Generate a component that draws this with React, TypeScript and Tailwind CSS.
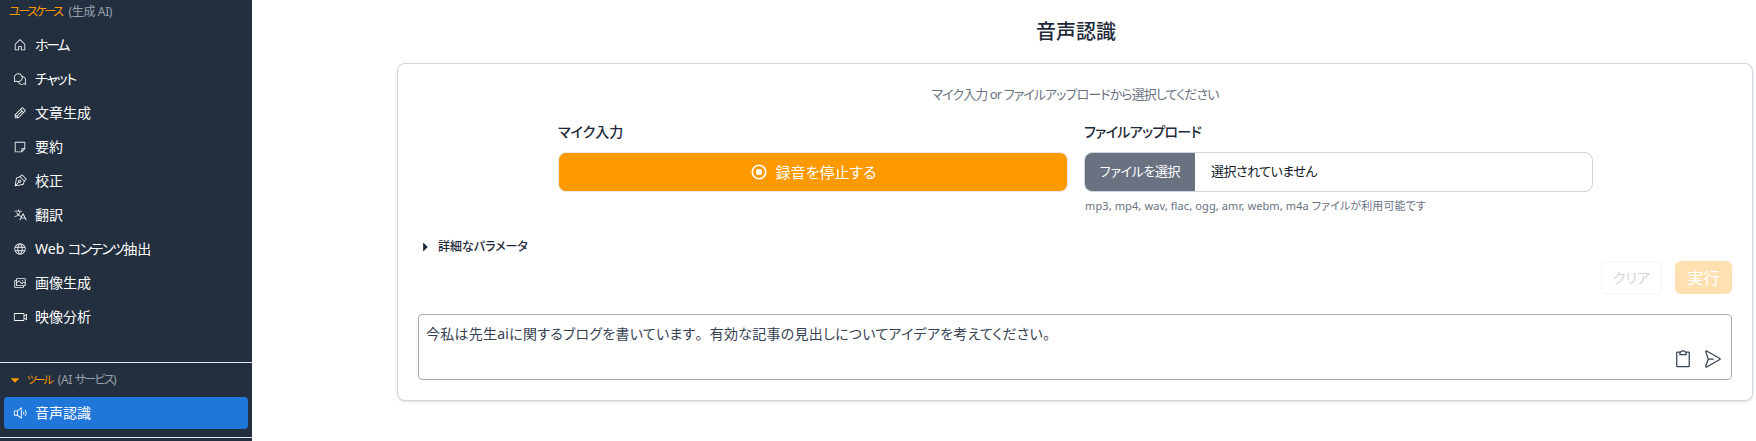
import {
  PiCaretDownFill,
  PiCaretRightFill,
  PiChatsCircle,
  PiClipboard,
  PiGlobe,
  PiHouse,
  PiImages,
  PiNoteBlank,
  PiPaperPlaneRight,
  PiPenNib,
  PiPencil,
  PiSpeakerHigh,
  PiStopCircleBold,
  PiTranslate,
  PiVideoCamera,
} from "react-icons/pi";

const menuItems = [
  { label: <span className="tracking-[-0.17em]">ホーム</span>, icon: <PiHouse /> },
  { label: <span className="tracking-[-0.09em]">チャット</span>, icon: <PiChatsCircle /> },
  { label: "文章生成", icon: <PiPencil /> },
  { label: "要約", icon: <PiNoteBlank /> },
  { label: "校正", icon: <PiPenNib /> },
  { label: "翻訳", icon: <PiTranslate /> },
  {
    label: (
      <>
        Web <span className="tracking-[-0.12em]">コンテンツ</span>抽出
      </>
    ),
    icon: <PiGlobe />,
  },
  { label: "画像生成", icon: <PiImages /> },
  { label: "映像分析", icon: <PiVideoCamera /> },
];

const Sidebar = () => (
  <aside className="flex h-[441px] w-[252px] shrink-0 flex-col overflow-hidden bg-[#232f3e] text-white">
    <div className="flex h-[29px] items-start pl-[9px] pt-1 text-xs">
      <span className="tracking-[-0.2em] text-[#ff9900]">ユースケース</span>
      <span className="ml-[7px] tracking-[-0.03em] text-gray-400">(生成 AI)</span>
    </div>
    <nav className="flex flex-col gap-0.5 px-1">
      {menuItems.map((item, i) => (
        <div key={i} className="flex h-8 items-center pl-[9px] text-sm">
          <span className="mr-2 text-sm text-gray-100">{item.icon}</span>
          <span>{item.label}</span>
        </div>
      ))}
    </nav>
    <div className="mt-[29px] border-t border-gray-200" />
    <div className="flex h-[34px] items-center pl-[9px] text-xs">
      <PiCaretDownFill className="mr-1.5 text-[#ff9900]" />
      <span className="text-[11px] tracking-[-0.2em] text-[#ff9900]">ツール</span>
      <span className="ml-1.5 tracking-[-0.03em] text-gray-400">
        (AI <span className="tracking-[-0.14em]">サービス</span>)
      </span>
    </div>
    <div className="mx-1 flex h-8 items-center rounded bg-[#2176d9] pl-[9px] text-sm">
      <PiSpeakerHigh className="mr-2 text-sm" />
      音声認識
    </div>
    <div className="mt-2 border-t border-gray-200" />
  </aside>
);

const Card = () => (
  <section className="rounded-lg border border-gray-300 bg-white px-5 pb-5 pt-5 shadow">
    <p className="text-center text-[13px] leading-5 tracking-[-0.07em] text-gray-500">
      マイク入力 or ファイルアップロードから選択してください
    </p>
    <div className="ml-[140px] mt-[18px] flex gap-4">
      <div className="w-[510px]">
        <h2 className="text-sm font-medium leading-5">マイク入力</h2>
        <button className="mt-2.5 flex h-[40px] w-full items-center justify-center rounded-lg border border-gray-200 bg-[#ff9900] text-[15px] text-white">
          <PiStopCircleBold className="mr-2 text-lg" />
          録音を停止する
        </button>
      </div>
      <div className="w-[509px]">
        <h2 className="text-sm font-medium leading-5 tracking-[-0.05em]">ファイルアップロード</h2>
        <div className="mt-2.5 flex h-[40px] items-center overflow-hidden rounded-lg border border-gray-300">
          <span className="flex h-full w-[110px] items-center justify-center bg-gray-500 text-[13px] tracking-[-0.03em] text-white">
            ファイルを選択
          </span>
          <span className="ml-4 text-[13px] tracking-[-0.04em] text-gray-900">選択されていません</span>
        </div>
        <p className="mt-1.5 pl-[1px] text-[11px] leading-4 tracking-[0.01em] text-gray-500">
          mp3, mp4, wav, flac, ogg, amr, webm, m4a ファイルが利用可能です
        </p>
      </div>
    </div>
    <div className="mt-[25px] flex items-center pl-px text-xs font-medium leading-4">
      <PiCaretRightFill className="mr-[7px] text-xs" />
      詳細なパラメータ
    </div>
    <div className="mt-1.5 flex justify-end gap-[13px]">
      <button className="h-[33px] w-[61px] rounded border border-gray-100 text-sm text-gray-300">
        クリア
      </button>
      <button className="h-[33px] w-[57px] rounded-md bg-[#ffe0b0] text-base text-white">
        実行
      </button>
    </div>
    <div className="mt-5 flex h-[66px] flex-col rounded border border-[#aaaaaa] pb-2.5 pl-[7px] pr-[9px] pt-[9px] text-sm leading-5 text-gray-700">
      <p className="tracking-[0.018em]">
        今私は先生aiに関するブログを書いています<span className="[font-feature-settings:normal]">。</span>有効な記事の見出しについてアイデアを考えてください。
      </p>
      <div className="mt-auto flex justify-end gap-[9px] text-xl leading-none text-gray-700">
        <PiClipboard />
        <PiPaperPlaneRight />
      </div>
    </div>
  </section>
);

export default function App() {
  return (
    <div className="flex h-[441px] w-[1756px] overflow-hidden bg-white font-['Noto_Sans','Noto_Sans_CJK_JP',sans-serif] text-gray-800 [font-feature-settings:'palt']">
      <Sidebar />
      <main className="flex-1 pl-[145px] pr-[3px]">
        <h1 className="flex h-[63px] items-center justify-center pl-0.5 text-xl font-medium">音声認識</h1>
        <Card />
      </main>
    </div>
  );
}
